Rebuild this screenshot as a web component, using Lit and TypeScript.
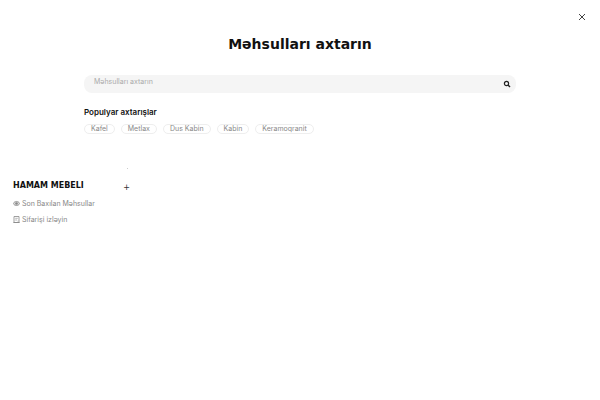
import { LitElement, html, css, svg } from "lit";
import { customElement } from "lit/decorators.js";

const POPULAR = ["Kafel", "Metlax", "Dus Kabin", "Kabin", "Keramoqranit"];

const closeIcon = svg`<svg width="8" height="8" viewBox="0 0 8 8" aria-hidden="true"><path d="M1 1l6 6M7 1L1 7" stroke="#444" stroke-width="1" fill="none"/></svg>`;
const searchIcon = svg`<svg width="8" height="8" viewBox="0 0 8 8" aria-hidden="true"><circle cx="3.5" cy="3.5" r="2.1" stroke="#222" stroke-width="1.2" fill="none"/><path d="M5 5l2 2" stroke="#222" stroke-width="1.4"/></svg>`;
const eyeIcon = svg`<svg width="7" height="7" viewBox="0 0 7 7" aria-hidden="true"><path d="M.3 3.5C1.5 .8 5.5 .8 6.7 3.5C5.5 6.2 1.5 6.2 .3 3.5Z" stroke="#888" stroke-width=".8" fill="#ddd"/><circle cx="3.5" cy="3.5" r="1.3" fill="#888"/></svg>`;
const orderIcon = svg`<svg width="7" height="7" viewBox="0 0 7 7" aria-hidden="true"><path d="M1 .5h5v6h-5zM.3 6.5h6.4" stroke="#888" stroke-width=".8" fill="none"/><path d="M2.2 2.3h2.6M2.2 4h1.8M5 4.6v1" stroke="#999" stroke-width=".7"/></svg>`;

@customElement("app-root")
export class AppRoot extends LitElement {
  static styles = css`
    :host {
      display: block;
      min-height: 100vh;
      background: #fff;
      color: #111;
      font: 7px/10px "Inter", sans-serif;
    }
    button, input {
      font: inherit;
      border: 0;
      padding: 0;
      background: none;
    }
    svg { display: block; flex: none; }
    a { color: #888; text-decoration: none; }
    h1, h2, ul { margin: 0; padding: 0; list-style: none; }
    header {
      display: flex;
      justify-content: flex-end;
      padding: 13px 14px 0;
    }
    .close { height: 8px; }
    .panel { width: 72%; margin: 0 auto; }
    h1 {
      margin-top: 13px;
      font: bold 14px/20px "DejaVu Sans", sans-serif;
      text-align: center;
    }
    form {
      display: flex;
      align-items: flex-start;
      margin-top: 21px;
      padding-right: 5px;
      height: 18px;
      border-radius: 8px;
      background: #f5f5f5;
    }
    input {
      flex: 1;
      min-width: 0;
      height: 12px;
      padding-left: 10px;
      outline: none;
    }
    input::placeholder { color: #aaa; opacity: 1; }
    .search { height: 8px; margin-top: 5px; }
    h2 { font-size: 8px; line-height: 10px; font-weight: 600; }
    .popular { margin-top: 14px; }
    .tags {
      display: flex;
      flex-wrap: wrap;
      gap: 6px;
      margin-top: 7px;
    }
    .tags a {
      display: block;
      padding: 0 6px;
      line-height: 8px;
      border: 1px solid #eee;
      border-radius: 5px;
    }
    nav { padding: 0 13px; margin-top: 34px; }
    .dot {
      width: 1px;
      height: 1px;
      margin-left: 114px;
      background: #ccc;
    }
    .category {
      display: flex;
      align-items: flex-end;
      justify-content: space-between;
      width: 117px;
      margin-top: 11px;
      color: #111;
      font: bold 8px/12px "DejaVu Sans", sans-serif;
    }
    .plus { font-weight: 400; line-height: 8px; color: #333; }
    .links { display: grid; gap: 6px; margin-top: 7px; }
    .links a { display: flex; gap: 2px; width: fit-content; }
    .links svg { margin-top: 1px; }
  `;

  render() {
    return html`
      <header><button class="close" aria-label="Bağla">${closeIcon}</button></header>
      <main class="panel">
        <h1>Məhsulları axtarın</h1>
        <form role="search">
          <input type="text" placeholder="Məhsulları axtarın" aria-label="Məhsulları axtarın" />
          <button class="search" type="button" aria-label="Axtar">${searchIcon}</button>
        </form>
        <section class="popular">
          <h2>Populyar axtarışlar</h2>
          <ul class="tags">${POPULAR.map((t) => html`<li><a href="#">${t}</a></li>`)}</ul>
        </section>
      </main>
      <nav>
        <div class="dot"></div>
        <a class="category" href="#"><span>HAMAM MEBELI</span><span class="plus">+</span></a>
        <ul class="links">
          <li><a href="#">${eyeIcon}<span>Son Baxılan Məhsullar</span></a></li>
          <li><a href="#">${orderIcon}<span>Sifarişi izləyin</span></a></li>
        </ul>
      </nav>
    `;
  }
}
